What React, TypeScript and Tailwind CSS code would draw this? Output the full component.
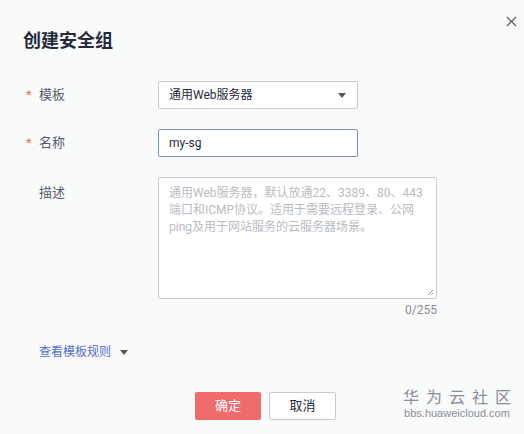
const font = { fontFamily: 'Roboto, "Noto Sans CJK SC", sans-serif' }

export default function App() {
  return (
    <div className="relative h-[434px] w-[524px] overflow-hidden bg-[#f9fafa] text-[#252b3a]" style={font}>
      <button className="absolute left-[505px] top-[15px] p-[1px]">
        <svg width="11" height="11" viewBox="0 0 11 11">
          <path d="M1 1L10 10M10 1L1 10" stroke="#666" strokeWidth="1.3" />
        </svg>
      </button>

      <h1 className="pl-[23px] pt-[28px] text-[18px] font-bold leading-[26px] text-[#252b3a]">创建安全组</h1>

      <div className="mt-[27px] flex flex-col gap-[20px] pl-[26px]">
        <div className="flex items-center">
          <div className="flex w-[132px] items-center text-[13px] text-[#575d6c]">
            <span className="w-[13px] text-[#f06e6e]">*</span>
            <span>模板</span>
          </div>
          <div className="flex h-[28px] w-[200px] items-center justify-between rounded-[2px] border border-[#c7cbd1] bg-white pl-[10px] pr-[11px] text-[12px] text-[#252b3a]">
            <span>通用Web服务器</span>
            <svg width="8" height="5" viewBox="0 0 8 5"><path d="M0 0h8L4 5z" fill="#555" /></svg>
          </div>
        </div>

        <div className="flex items-center">
          <div className="flex w-[132px] items-center text-[13px] text-[#575d6c]">
            <span className="w-[13px] text-[#f06e6e]">*</span>
            <span>名称</span>
          </div>
          <div className="flex h-[28px] w-[200px] items-center rounded-[2px] border border-[#7b8fd6] bg-white pl-[10px] text-[12px] text-[#252b3a]">
            my-sg
          </div>
        </div>

        <div className="flex items-start">
          <div className="flex w-[132px] pt-[6px] text-[13px] text-[#575d6c]">
            <span className="w-[13px]" />
            <span>描述</span>
          </div>
          <div className="flex flex-col items-end">
            <div className="relative h-[122px] w-[279px] rounded-[2px] border border-[#c7cbd1] bg-white px-[10px] pt-[7px] text-[12px] leading-[17px] text-[#b9bcc2]">
              通用Web服务器，默认放通22、3389、80、443端口和ICMP协议。适用于需要远程登录、公网ping及用于网站服务的云服务器场景。
              <svg className="absolute bottom-[2px] right-[2px]" width="7" height="7" viewBox="0 0 7 7">
                <path d="M6 1L1 6M6 4L4 6" stroke="#999" strokeWidth="1" />
              </svg>
            </div>
            <span className="mt-[3px] text-[12px] leading-[16px] text-[#8a8e99]">0/255</span>
          </div>
        </div>
      </div>

      <div className="mt-[25px] flex h-[18px] items-center gap-[9px] pl-[39px] text-[12px] text-[#526ecc]">
        <span>查看模板规则</span>
        <svg width="8" height="5" viewBox="0 0 8 5"><path d="M0 0h8L4 5z" fill="#555" /></svg>
      </div>

      <div className="mt-[31px] flex items-center pl-[195px]">
        <button className="h-[28px] w-[66px] rounded-[2px] bg-[#f06b6b] text-[13px] text-white">确定</button>
        <button className="ml-[8px] h-[28px] w-[67px] rounded-[2px] border border-[#c7cbd1] bg-white text-[13px] text-[#252b3a]">取消</button>
      </div>

      <div className="absolute left-[401px] top-[390px] flex w-[112px] flex-col items-center whitespace-nowrap leading-none text-[#8a8e99]">
        <span className="pl-[7px] text-[16px] tracking-[7px]">华为云社区</span>
        <span className="mt-[2px] text-[11px]" style={{ fontFamily: '"Liberation Sans", sans-serif' }}>bbs.huaweicloud.com</span>
      </div>
    </div>
  )
}
